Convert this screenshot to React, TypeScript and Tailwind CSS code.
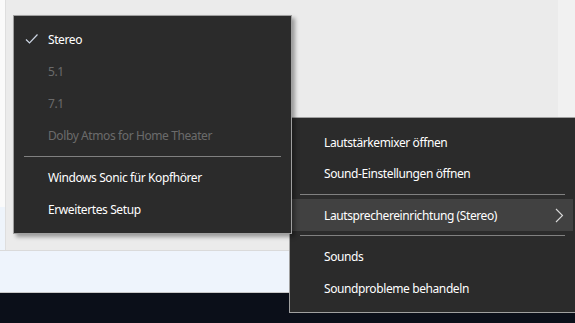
import React from "react";

const font = { fontFamily: '"Noto Sans", "Open Sans", sans-serif' };

function Check() {
  return (
    <svg width="14" height="12" viewBox="0 0 14 12" className="absolute left-[11px] top-[10px]">
      <path d="M1 6.5 L4.5 10 L12.5 1.5" fill="none" stroke="#cdd6e4" strokeWidth="1.2" />
    </svg>
  );
}

function Chevron() {
  return (
    <svg width="9" height="15" viewBox="0 0 9 15" className="absolute right-[9px] top-[9px]">
      <path d="M1 1 L7.5 7.5 L1 14" fill="none" stroke="#d9d9d9" strokeWidth="1.1" />
    </svg>
  );
}

function Item({
  label,
  disabled,
  checked,
  h = "h-[32px]",
}: {
  label: string;
  disabled?: boolean;
  checked?: boolean;
  h?: string;
}) {
  return (
    <div
      className={`relative flex items-center pl-[34px] pt-[2px] text-[12px] tracking-[-0.4px] ${h} ${
        disabled ? "text-[#6b6b6b]" : "text-white"
      }`}
    >
      {checked && <Check />}
      {label}
    </div>
  );
}

function Sep({ className }: { className: string }) {
  return <div className={`h-[1px] bg-[#808080] ${className}`} />;
}

export default function App() {
  return (
    <div className="relative w-[575px] h-[323px] overflow-hidden" style={font}>
      {/* background */}
      <div className="flex flex-col w-full h-full">
        <div className="flex h-[250px]">
          <div className="flex flex-col w-[6px] border-r border-[#dedede]">
            <div className="h-[207px] bg-[#fafafa]" />
            <div className="flex-1 bg-[#eef4fb]" />
          </div>
          <div className="flex-1 bg-[#ebebeb]" />
          <div className="w-[17px] bg-[#f1f1f1]" />
        </div>
        <div className="h-[43px] bg-[#eef4fc] border-t border-[#dadada] border-b border-b-[#c9c9c9]" />
        <div className="flex-1 bg-[#0b0f19] flex items-start pt-0">
          <div className="ml-[441px] flex flex-col items-center w-[9px]">
            <div className="w-[1px] h-[2px] bg-[#8a8a8a]" />
            <div className="w-[9px] h-[1px] bg-[#8a8a8a]" />
          </div>
          <div className="ml-[17px] w-[1px] h-[2px] bg-[#6a6a6a]" />
          <div className="ml-[71px] w-0 h-0 border-l-[4px] border-r-[4px] border-t-[4px] border-l-transparent border-r-transparent border-t-[#9a9a9a]" />
        </div>
      </div>

      {/* main context menu */}
      <div className="absolute left-[289px] top-[117px] w-[288px] h-[196px] bg-[#2b2b2b] border border-[#a0a0a0] pt-[8px] flex flex-col">
        <Item label="Lautstärkemixer öffnen" h="h-[31px]" />
        <Item label="Sound-Einstellungen öffnen" h="h-[31px]" />
        <Sep className="mt-[6px] mb-[4px] ml-[10px] mr-[11px]" />
        <div className="relative mr-[3px] bg-[#414141]">
          <Item label="Lautsprechereinrichtung (Stereo)" />
          <Chevron />
        </div>
        <Sep className="mt-[4px] mb-[4px] ml-[10px] mr-[11px]" />
        <Item label="Sounds" />
        <Item label="Soundprobleme behandeln" />
      </div>

      {/* submenu */}
      <div className="absolute left-[13px] top-[15px] w-[279px] h-[219px] bg-[#2b2b2b] border border-[#a0a0a0] pt-[7px] flex flex-col shadow-[3px_3px_4px_rgba(0,0,0,0.35)]">
        <Item label="Stereo" checked />
        <Item label="5.1" disabled />
        <Item label="7.1" disabled />
        <Item label="Dolby Atmos for Home Theater" disabled />
        <Sep className="mt-[5px] mb-[4px] mx-[10px]" />
        <Item label="Windows Sonic für Kopfhörer" />
        <Item label="Erweitertes Setup" />
      </div>
    </div>
  );
}
